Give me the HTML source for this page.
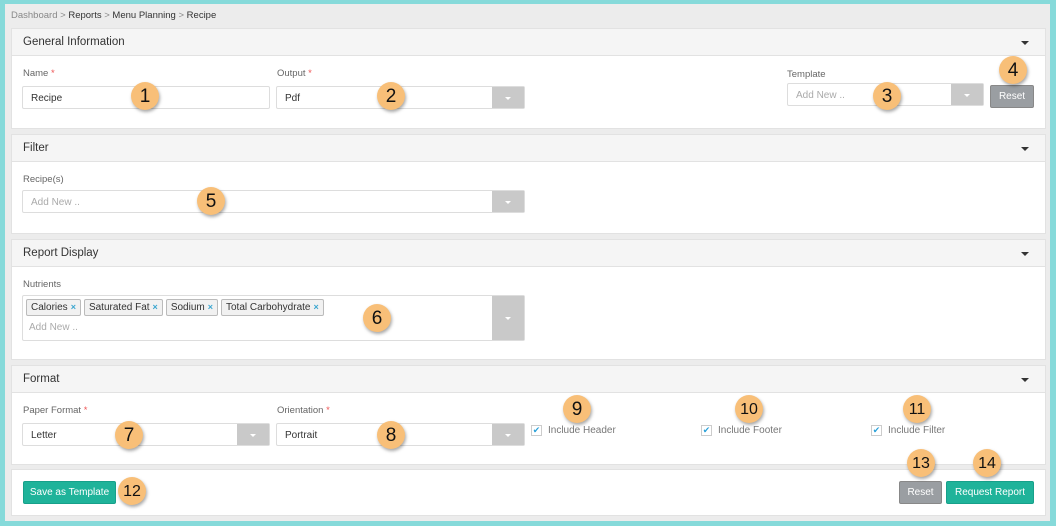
<!DOCTYPE html><html><head><style>
*{box-sizing:border-box;margin:0;padding:0}
body{width:1056px;height:526px;background:#86dada;font-family:"Liberation Sans",sans-serif;position:relative;overflow:hidden;font-size:10px;color:#444}
.pg{position:absolute;left:5px;top:4px;width:1045px;height:517px;background:#ececec}
.a{position:absolute}
.bc{left:11px;top:10px;font-size:9.5px;color:#333}
.bc span{color:#888}
.p{position:absolute;left:11px;width:1035px;background:#fff;border:1px solid #e2e2e2}
.ph{height:27px;background:#f5f5f5;border-bottom:1px solid #e2e2e2;font-size:11.5px;color:#333;padding:7px 0 0 11px;position:relative}
.ph:after{content:"";position:absolute;right:16px;top:12px;border:4px solid transparent;border-top:4px solid #333;border-bottom:0}
.lb{font-size:9.5px;color:#666}
.lb i{color:#e55;font-style:normal}
.in{position:absolute;height:23px;border:1px solid #ddd;border-radius:2px;background:#fff;font-size:10px;padding:6px 0 0 8px;color:#333}
.dd{position:absolute;right:0;top:0;width:32px;height:100%;background:#c9c9c9}
.dd:after{content:"";position:absolute;left:13px;top:calc(50% - 1px);border:3px solid transparent;border-top:3px solid #fff;border-bottom:0}
.bd{position:absolute;width:28px;height:28px;border-radius:50%;background:#f8bf78;box-shadow:1px 2px 3px rgba(0,0,0,.35);font-size:19px;color:#111;text-align:center;line-height:30px}
.btn{position:absolute;height:23px;border-radius:2px;color:#fff;font-size:10px;text-align:center;line-height:22px}
.g{background:#9a9ea2;border:1px solid #888}
.t{background:#1fb39a;border:1px solid #17a08a}
.tag{display:inline-block;border:1px solid #bbb;background:#f1f1f1;border-radius:2px;padding:2px 4px;margin-right:3px;font-size:10px;color:#333}
.tag b{color:#3aa6d0;font-weight:bold;font-size:9px;margin-left:3px}
.cb{position:absolute;width:11px;height:11px;border:1px solid #ccc;background:#fff;font-size:9px;color:#2aa0d8;line-height:9px;text-align:center}
.cl{position:absolute;font-size:10px;color:#777}
</style></head><body>
<div class="pg"></div>
<div class="a bc" style="left:11px">
<span>Dashboard</span> <span>&gt;</span> Reports <span>&gt;</span> Menu Planning <span>&gt;</span> Recipe</div>

<div class="p" style="top:28px;height:101px"><div class="ph">General Information</div></div>
<div class="a lb" style="left:23px;top:68px">Name <i>*</i></div>
<div class="in" style="left:22px;top:86px;width:248px">Recipe</div>
<div class="a lb" style="left:277px;top:68px">Output <i>*</i></div>
<div class="in" style="left:276px;top:86px;width:249px">Pdf<div class="dd"></div></div>
<div class="a lb" style="left:787px;top:69px">Template</div>
<div class="in" style="left:787px;top:83px;width:197px;color:#aaa">Add New ..<div class="dd"></div></div>
<div class="btn g" style="left:990px;top:85px;width:44px">Reset</div>

<div class="p" style="top:134px;height:100px"><div class="ph">Filter</div></div>
<div class="a lb" style="left:23px;top:174px">Recipe(s)</div>
<div class="in" style="left:22px;top:190px;width:503px;color:#aaa">Add New ..<div class="dd"></div></div>

<div class="p" style="top:239px;height:121px"><div class="ph">Report Display</div></div>
<div class="a lb" style="left:23px;top:279px">Nutrients</div>
<div class="in" style="left:22px;top:295px;width:503px;height:46px;padding:3px 0 0 3px">
<span class="tag">Calories<b>×</b></span><span class="tag">Saturated Fat<b>×</b></span><span class="tag">Sodium<b>×</b></span><span class="tag">Total Carbohydrate<b>×</b></span>
<div style="color:#aaa;margin:6px 0 0 3px">Add New ..</div><div class="dd"></div></div>

<div class="p" style="top:365px;height:100px"><div class="ph">Format</div></div>
<div class="a lb" style="left:23px;top:405px">Paper Format <i>*</i></div>
<div class="in" style="left:22px;top:423px;width:248px">Letter<div class="dd"></div></div>
<div class="a lb" style="left:277px;top:405px">Orientation <i>*</i></div>
<div class="in" style="left:276px;top:423px;width:249px">Portrait<div class="dd"></div></div>
<div class="cb" style="left:531px;top:425px">✔</div><div class="cl" style="left:548px;top:425px">Include Header</div>
<div class="cb" style="left:701px;top:425px">✔</div><div class="cl" style="left:718px;top:425px">Include Footer</div>
<div class="cb" style="left:871px;top:425px">✔</div><div class="cl" style="left:888px;top:425px">Include Filter</div>

<div class="p" style="top:469px;height:47px"></div>
<div class="btn t" style="left:23px;top:481px;width:93px">Save as Template</div>
<div class="btn g" style="left:899px;top:481px;width:43px">Reset</div>
<div class="btn t" style="left:946px;top:481px;width:88px">Request Report</div>

<div class="bd" style="left:131px;top:82px">1</div>
<div class="bd" style="left:377px;top:82px">2</div>
<div class="bd" style="left:873px;top:82px">3</div>
<div class="bd" style="left:999px;top:56px">4</div>
<div class="bd" style="left:197px;top:187px">5</div>
<div class="bd" style="left:363px;top:304px">6</div>
<div class="bd" style="left:115px;top:421px">7</div>
<div class="bd" style="left:377px;top:421px">8</div>
<div class="bd" style="left:563px;top:395px">9</div>
<div class="bd" style="left:735px;top:395px;font-size:16px">10</div>
<div class="bd" style="left:903px;top:395px;font-size:16px">11</div>
<div class="bd" style="left:118px;top:477px;font-size:16px">12</div>
<div class="bd" style="left:907px;top:449px;font-size:16px">13</div>
<div class="bd" style="left:973px;top:449px;font-size:16px">14</div>
</body></html>
